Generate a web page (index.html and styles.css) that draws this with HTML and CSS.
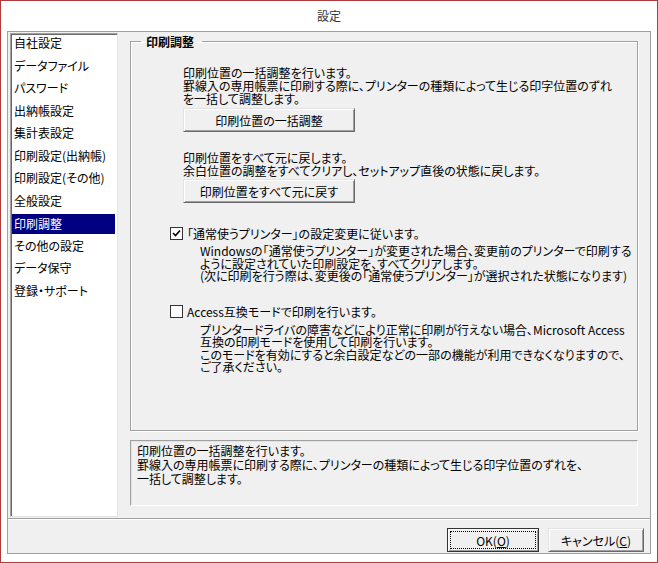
FILE: index.html
```html
<!DOCTYPE html>
<html lang="ja">
<head>
    <meta charset="UTF-8">
    <title>設定</title>
    <link rel="stylesheet" href="styles.css">
</head>
<body>
    <div class="dialog">
        <div class="titlebar">設定</div>
        <div class="frame">
            <div class="main">
                <ul class="menu">
                    <li>自社設定</li>
                    <li>データファイル</li>
                    <li>パスワード</li>
                    <li>出納帳設定</li>
                    <li>集計表設定</li>
                    <li>印刷設定(出納帳)</li>
                    <li>印刷設定(その他)</li>
                    <li>全般設定</li>
                    <li class="selected">印刷調整</li>
                    <li>その他の設定</li>
                    <li>データ保守</li>
                    <li>登録・サポート</li>
                </ul>
                <div class="content">
                    <fieldset class="group">
                        <legend>印刷調整</legend>
                        <div class="group-body">
                            <div class="block">
                                <p class="text">印刷位置の一括調整を行います。<br>罫線入の専用帳票に印刷する際に、プリンターの種類によって生じる印字位置のずれ<br>を一括して調整します。</p>
                                <button class="btn btn-wide">印刷位置の一括調整</button>
                            </div>
                            <div class="block block-2">
                                <p class="text">印刷位置をすべて元に戻します。<br>余白位置の調整をすべてクリアし、セットアップ直後の状態に戻します。</p>
                                <button class="btn btn-wide btn-tight">印刷位置をすべて元に戻す</button>
                            </div>
                            <div class="option">
                                <div class="check-row">
                                    <span class="checkbox">
                                        <svg width="11" height="11" viewBox="0 0 11 11"><path d="M2 5 L4.5 7.5 L9 2.5" fill="none" stroke="#000" stroke-width="1.6"/></svg>
                                    </span>
                                    <span>「通常使うプリンター」の設定変更に従います。</span>
                                </div>
                                <p class="desc">Windowsの「通常使うプリンター」が変更された場合、変更前のプリンターで印刷する<br>ように設定されていた印刷設定を、すべてクリアします。<br>(次に印刷を行う際は、変更後の「通常使うプリンター」が選択された状態になります)</p>
                            </div>
                            <div class="option">
                                <div class="check-row">
                                    <span class="checkbox"></span>
                                    <span>Access互換モードで印刷を行います。</span>
                                </div>
                                <p class="desc">プリンタードライバの障害などにより正常に印刷が行えない場合、Microsoft Access<br>互換の印刷モードを使用して印刷を行います。<br>このモードを有効にすると余白設定などの一部の機能が利用できなくなりますので、<br>ご了承ください。</p>
                            </div>
                        </div>
                    </fieldset>
                    <div class="help">
                        印刷位置の一括調整を行います。<br>
                        罫線入の専用帳票に印刷する際に、プリンターの種類によって生じる印字位置のずれを、<br>
                        一括して調整します。
                    </div>
                </div>
            </div>
            <div class="actions">
                <button class="btn btn-ok">OK(<u>O</u>)</button>
                <button class="btn btn-cancel">キャンセル(<u>C</u>)</button>
            </div>
        </div>
    </div>
</body>
</html>
```

FILE: styles.css
```css
body {
    margin: 0;
    font-family: "Noto Sans CJK JP", sans-serif;
    font-size: 12px;
    color: #000;
    background-color: #ffffff;
}
.dialog {
    width: 658px;
    height: 563px;
    box-sizing: border-box;
    border: 1px solid #b03a3a;
    background-color: #ffffff;
    display: flex;
    flex-direction: column;
    font-feature-settings: "palt";
}
.titlebar {
    height: 30px;
    line-height: 30px;
    text-align: center;
    color: #333;
}
.frame {
    flex: 1;
    margin: 0 6px 8px;
    border: 1px solid #a0a0a0;
    background-color: #f0f0f0;
    display: flex;
    flex-direction: column;
}
.main {
    flex: 1;
    display: flex;
    padding: 1px 0 1px 1px;
    border-bottom: 1px solid #a0a0a0;
    box-shadow: 0 1px 0 #ffffff;
}
/* 左のメニュー */
.menu {
    list-style: none;
    margin: 0 0 0 1px;
    padding: 0 0 0 1px;
    width: 108px;
    box-sizing: border-box;
    background-color: #ffffff;
    border: 1px solid;
    border-color: #a0a0a0 #e3e3e3 #e3e3e3 #a0a0a0;
    box-shadow: inset 1px 1px 0 #696969;
    display: flex;
    flex-direction: column;
    gap: 2.5px;
}
.menu li {
    height: 20px;
    line-height: 18px;
    padding-left: 2px;
    margin-right: 2px;
    white-space: nowrap;
}
.menu li.selected {
    background-color: #000080;
    color: #ffffff;
    line-height: 20px;
}
.content {
    flex: 1;
    padding: 0 12px 0 12px;
    display: flex;
    flex-direction: column;
}
.group {
    margin: 2px 0 0;
    padding: 0;
    height: 396px;
    box-sizing: border-box;
    border: 1px solid #a0a0a0;
    box-shadow: 1px 1px 0 #ffffff, inset 1px 1px 0 #ffffff;
    min-width: 0;
}
.group legend {
    margin-left: 10px;
    padding: 0 8px 0 5px;
    font-weight: bold;
    line-height: 13px;
}
.group-body {
    padding: 18px 0 0 39px;
}
.block {
    margin-left: 13px;
}
.block-2 {
    margin-top: 19px;
}
.text, .desc {
    margin: 0;
    white-space: nowrap;
}
.text {
    line-height: 13px;
}
.btn {
    font-family: inherit;
    font-size: 12px;
    color: #000;
    background-color: #f0f0f0;
    height: 24px;
    padding: 0;
    border: 1px solid;
    border-color: #e3e3e3 #696969 #696969 #e3e3e3;
    box-shadow: inset 1px 1px 0 #ffffff, inset -1px -1px 0 #a0a0a0;
    font-feature-settings: "palt";
}
.btn-wide {
    width: 172px;
    margin-top: 3px;
}
.btn-tight {
    margin-top: 2px;
}
.option {
    margin-top: 24px;
}
.option + .option {
    margin-top: 22px;
}
.check-row {
    display: flex;
    align-items: center;
    gap: 4px;
    height: 13px;
    line-height: 13px;
}
.checkbox {
    width: 13px;
    height: 13px;
    box-sizing: border-box;
    border: 1px solid #333;
    background-color: #ffffff;
    display: flex;
    align-items: center;
    justify-content: center;
}
.desc {
    margin: 5px 0 0 30px;
    line-height: 12.5px;
}
.option + .option .desc {
    margin-top: 6px;
}
.help {
    margin-top: 9px;
    height: 66px;
    box-sizing: border-box;
    padding: 3px 6px;
    line-height: 14px;
    white-space: nowrap;
    border: 1px solid;
    border-color: #a0a0a0 #ffffff #ffffff #a0a0a0;
    box-shadow: inset 1px 1px 0 #e3e3e3;
}
.actions {
    height: 34px;
    display: flex;
    justify-content: flex-end;
    align-items: flex-start;
    gap: 9px;
    padding: 9px 6px 0 0;
    box-sizing: border-box;
}
.btn-ok {
    width: 92px;
    border-color: #333 #333 #333 #333;
    outline: 1px dotted #000;
    outline-offset: -4px;
}
.btn-cancel {
    width: 96px;
}
```
